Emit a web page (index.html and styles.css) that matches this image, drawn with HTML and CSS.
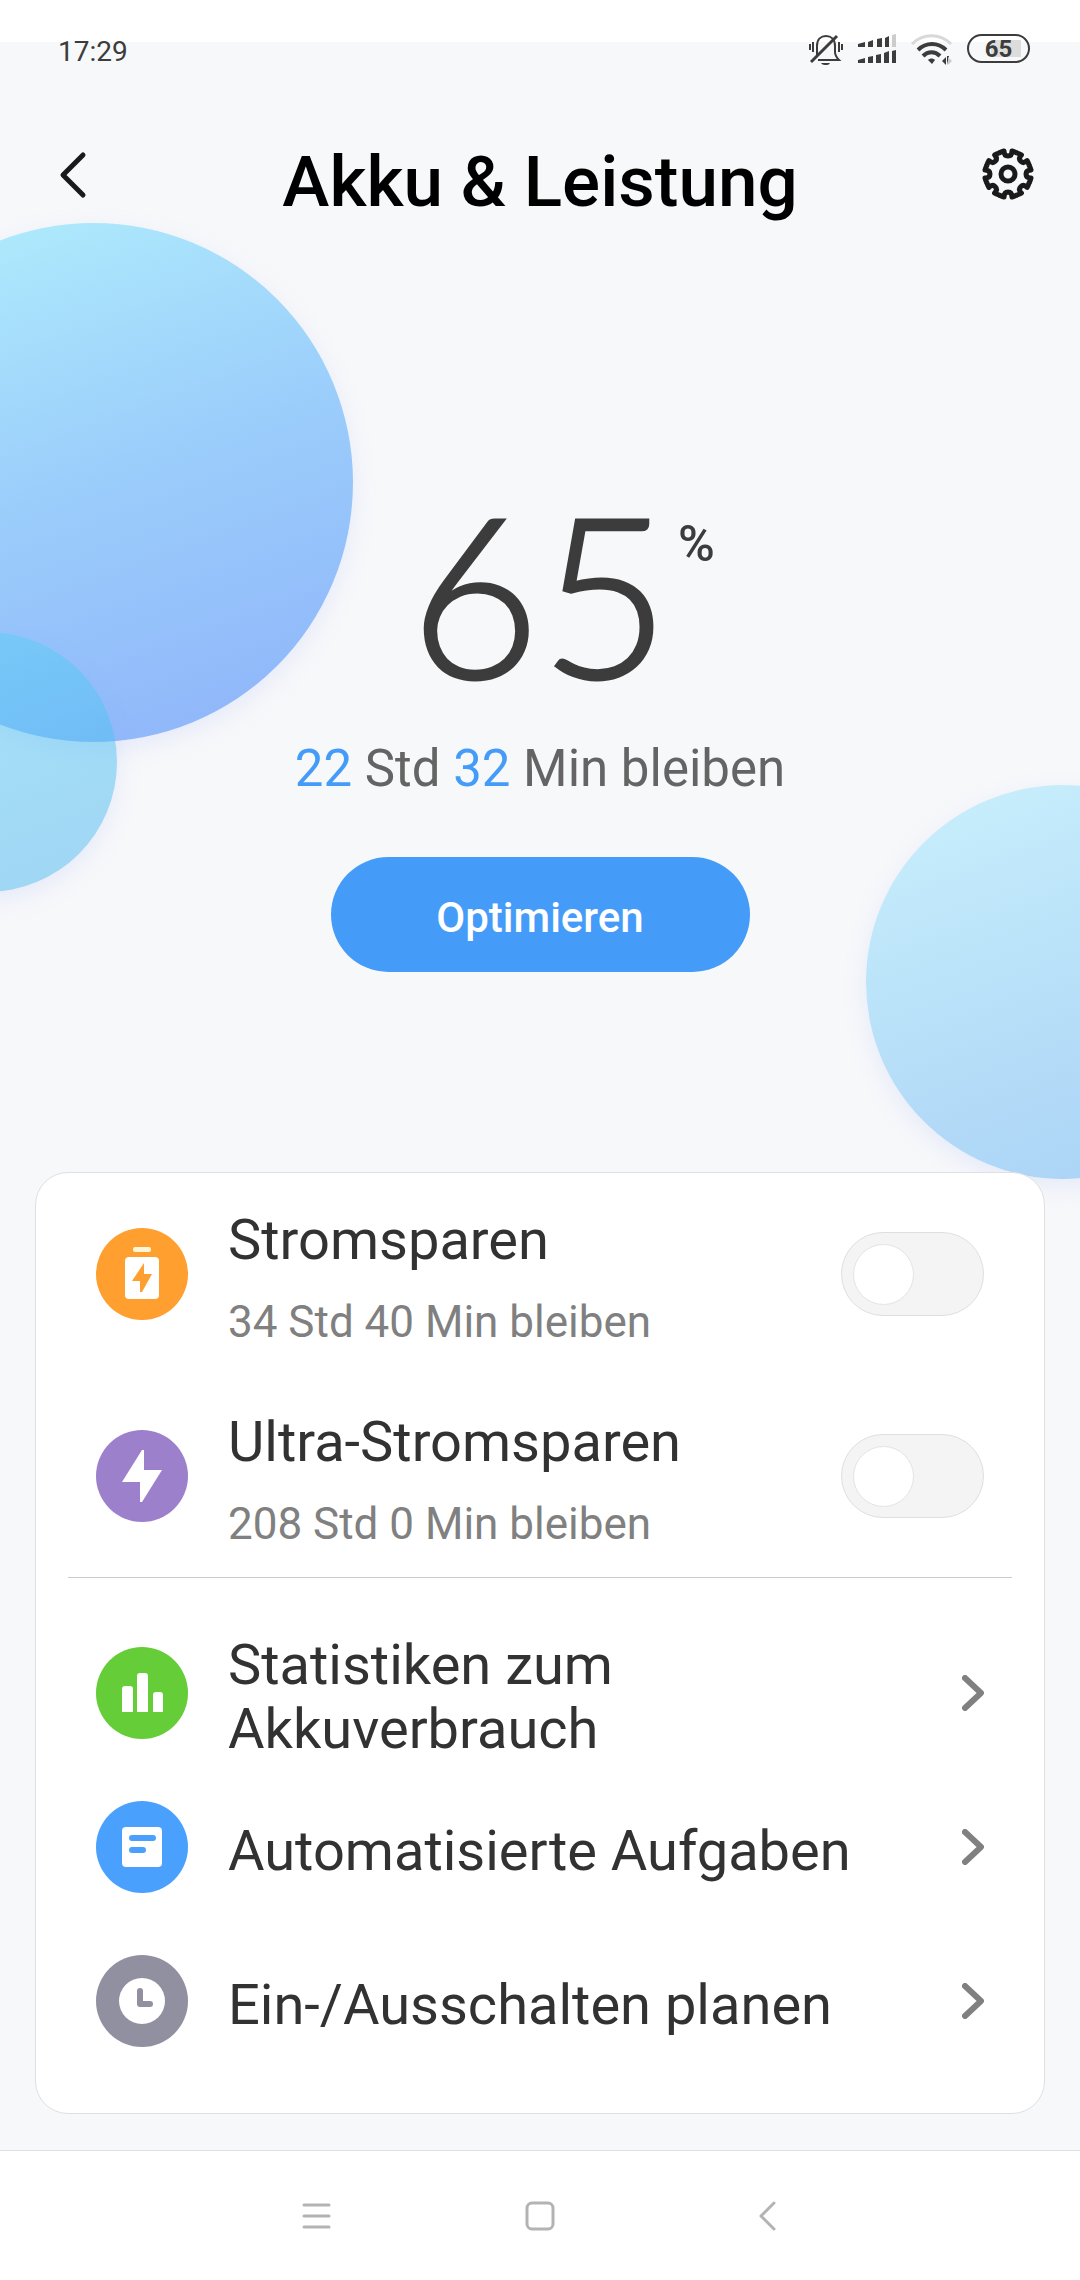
FILE: index.html
```html
<!DOCTYPE html>
<html lang="de">
<head>
  <meta charset="UTF-8">
  <meta name="viewport" content="width=device-width, initial-scale=1.0">
  <title>Akku &amp; Leistung</title>
  <link rel="stylesheet" href="styles.css">
</head>
<body>
  <div class="screen">
    <div class="bubbles" aria-hidden="true">
      <div class="bubble bubble-large"></div>
      <div class="bubble bubble-small"></div>
      <div class="bubble bubble-right"></div>
    </div>

    <div class="status-bar">
      <span class="clock">17:29</span>
      <div class="status-icons">
        <svg class="status-bell" width="34" height="32" viewBox="0 0 34 32" fill="none" stroke="#3c3c3c" stroke-width="2">
          <path d="M8 22V12C8 5 12 2 17 2s9 3 9 10v6c0 4 2 6 4 8H9" />
          <path d="M12 29h9c-1 2-3 2-4 2s-4 0-5-2z" fill="#3c3c3c" stroke="none" />
          <path d="M2 28L28 2" stroke-width="3" />
          <path d="M1 10v6M4 8v10M30 8v10M33 10v6" />
        </svg>
        <svg width="40" height="30" viewBox="0 0 40 30" fill="#3c3c3c">
          <path d="M1 10l7-2v5H1zM11 8l5-2v7h-5zM20 5l5-1v9h-5zM28 4l4-2v11h-4z" />
          <path d="M35 1l4-1v13h-4z" fill="#ccc" />
          <path d="M1 26l7-2v5H1zM11 23l5-1v7h-5zM19 21l5-1v9h-5zM27 19l5-2v12h-5zM35 17l4-1v13h-4z" />
        </svg>
        <svg width="42" height="32" viewBox="0 0 42 32" fill="none" stroke="#3c3c3c" stroke-width="4">
          <path d="M1 10c11-11 28-11 39 0" stroke="#d8d8d8" stroke-width="3" />
          <path d="M7 16c8-8 20-8 28 0" />
          <path d="M12 22c5-5 12-5 17 0" />
          <path d="M17 26c2-2 5-2 7 0l-3 4z" fill="#3c3c3c" stroke="none" />
          <path d="M35 23v8l-4-4zM38 22h-2v9" fill="#3c3c3c" stroke="none" />
          <path d="M37 31v-8l4 4z" fill="#ccc" stroke="none" />
        </svg>
        <span class="battery">65</span>
      </div>
    </div>

    <header class="header">
      <button type="button" class="icon-button" aria-label="Zurück">
        <svg width="52" height="52" viewBox="0 0 52 52" fill="none" stroke="#1a1a1a" stroke-width="5" stroke-linecap="round" stroke-linejoin="round">
          <path d="M37 7L17 27l20 20" />
        </svg>
      </button>
      <h1>Akku &amp; Leistung</h1>
      <button type="button" class="icon-button" aria-label="Einstellungen">
        <svg width="52" height="52" viewBox="-26 -26 52 52" fill="none" stroke="#1a1a1a" stroke-width="5" stroke-linejoin="round">
          <defs>
            <path id="tooth" d="M-9 -21A23 23 0 0 1 -4 -23Q-4 -18 0 -18Q4 -18 4 -23A23 23 0 0 1 9 -21" />
          </defs>
          <use href="#tooth" />
          <use href="#tooth" transform="rotate(45)" />
          <use href="#tooth" transform="rotate(90)" />
          <use href="#tooth" transform="rotate(135)" />
          <use href="#tooth" transform="rotate(180)" />
          <use href="#tooth" transform="rotate(225)" />
          <use href="#tooth" transform="rotate(270)" />
          <use href="#tooth" transform="rotate(315)" />
          <circle r="7" />
        </svg>
      </button>
    </header>

    <main>
      <section class="hero">
        <div class="level">
          <span class="level-value">65</span>
          <span class="level-unit">%</span>
        </div>
        <p class="remaining"><b>22</b> Std <b>32</b> Min bleiben</p>
        <button type="button" class="optimize">Optimieren</button>
      </section>

      <section class="card">
        <div class="row row-mode">
          <svg class="row-icon" viewBox="0 0 92 92">
            <circle cx="46" cy="46" r="46" fill="#ff9f30" />
            <rect x="37" y="19" width="18" height="5" rx="2" fill="#fff6d8" />
            <rect x="29" y="29" width="34" height="42" rx="4" fill="#fff" />
            <path d="M48 35L36 53h8v11h2l10-18h-8z" fill="#ff9f30" />
          </svg>
          <label class="row-text" for="saver">
            <span class="row-title">Stromsparen</span>
            <span class="row-sub">34 Std 40 Min bleiben</span>
          </label>
          <input type="checkbox" class="switch" id="saver">
        </div>
        <div class="row row-mode">
          <svg class="row-icon" viewBox="0 0 92 92">
            <circle cx="46" cy="46" r="46" fill="#9d80cc" />
            <path d="M46 20L26 52h18v20h2l20-32H48V20z" fill="#fff" />
          </svg>
          <label class="row-text" for="ultra">
            <span class="row-title">Ultra-Stromsparen</span>
            <span class="row-sub">208 Std 0 Min bleiben</span>
          </label>
          <input type="checkbox" class="switch" id="ultra">
        </div>

        <nav class="links">
          <a href="#statistik" class="row row-link">
            <svg class="row-icon" viewBox="0 0 92 92">
              <circle cx="46" cy="46" r="46" fill="#64cd37" />
              <path d="M26 65V42q0-3 3-3h5q3 0 3 3v23zM41 65V29q0-3 3-3h5q3 0 3 3v36zM57 65V48q0-3 3-3h4q3 0 3 3v17z" fill="#fff" />
            </svg>
            <span class="row-title">Statistiken zum Akkuverbrauch</span>
            <svg class="chevron" width="22" height="36" viewBox="0 0 22 36">
              <path d="M3 3l16 15L3 33" />
            </svg>
          </a>
          <a href="#aufgaben" class="row row-link">
            <svg class="row-icon" viewBox="0 0 92 92">
              <circle cx="46" cy="46" r="46" fill="#4aa1fd" />
              <rect x="26" y="26" width="40" height="40" rx="4" fill="#fff" />
              <path d="M36 37h21M36 49h11" fill="none" stroke="#4aa1fd" stroke-width="6" stroke-linecap="round" />
            </svg>
            <span class="row-title">Automatisierte Aufgaben</span>
            <svg class="chevron" width="22" height="36" viewBox="0 0 22 36">
              <path d="M3 3l16 15L3 33" />
            </svg>
          </a>
          <a href="#zeitplan" class="row row-link">
            <svg class="row-icon" viewBox="0 0 92 92">
              <circle cx="46" cy="46" r="46" fill="#9190a0" />
              <circle cx="46" cy="46" r="23" fill="#fff" />
              <path d="M44 36v13h10" fill="none" stroke="#9190a0" stroke-width="6" stroke-linecap="round" stroke-linejoin="round" />
            </svg>
            <span class="row-title">Ein-/Ausschalten planen</span>
            <svg class="chevron" width="22" height="36" viewBox="0 0 22 36">
              <path d="M3 3l16 15L3 33" />
            </svg>
          </a>
        </nav>
      </section>
    </main>

    <footer class="nav-bar">
      <button type="button" class="icon-button" aria-label="Menü">
        <svg width="32" height="32" viewBox="0 0 32 32" fill="none" stroke="#b3b3b3" stroke-width="3" stroke-linecap="round">
          <path d="M5 5h25M5 16h25M5 27h25" />
        </svg>
      </button>
      <button type="button" class="icon-button" aria-label="Startseite">
        <svg width="32" height="32" viewBox="0 0 32 32" fill="none" stroke="#b3b3b3" stroke-width="3">
          <rect x="3" y="3" width="26" height="26" rx="5" />
        </svg>
      </button>
      <button type="button" class="icon-button" aria-label="Zurück">
        <svg width="32" height="32" viewBox="0 0 32 32" fill="none" stroke="#b3b3b3" stroke-width="3" stroke-linecap="round" stroke-linejoin="round">
          <path d="M25 3L12 16l13 13" />
        </svg>
      </button>
    </footer>
  </div>
</body>
</html>
```
FILE: styles.css
```css
* {
  box-sizing: border-box;
}

body {
  margin: 0;
  font-family: Roboto, sans-serif;
  color: #323232;
  background-color: #f7f8fa;
}

h1,
p {
  margin: 0;
}

button {
  padding: 0;
  border: none;
  background: none;
  font-family: inherit;
  cursor: pointer;
}

svg {
  display: block;
  flex: none;
}

.screen {
  position: relative;
  display: flex;
  flex-direction: column;
  min-height: 100vh;
  overflow: hidden;
  background: linear-gradient(#fff 42px, #f7f8fa 42px);
}

/* Background bubbles */
.bubbles {
  position: absolute;
  inset: 0;
}

.bubble {
  position: absolute;
  border-radius: 50%;
  box-shadow: 0 8px 24px rgba(140, 170, 250, 0.16);
}

.bubble-large {
  left: -166px;
  top: 223px;
  width: 519px;
  height: 519px;
  background: linear-gradient(160deg, #ade9fc 10%, #9bcdfb 50%, #8fb5fa 95%);
}

.bubble-small {
  left: -143px;
  top: 632px;
  width: 260px;
  height: 260px;
  background: linear-gradient(160deg, rgba(92, 210, 248, 0.5), rgba(70, 178, 238, 0.5));
}

.bubble-right {
  left: calc(100% - 214px);
  top: 785px;
  width: 394px;
  height: 394px;
  background: linear-gradient(160deg, #c9effc 5%, #bbe3f9 40%, #aad2f6 95%);
}

/* Status bar */
.status-bar {
  position: relative;
  display: flex;
  justify-content: space-between;
  align-items: flex-start;
  height: 104px;
  padding: 34px 50px 0 58px;
}

.clock {
  font-size: 28px;
  line-height: 36px;
  color: #3c3c3c;
}

.status-icons {
  display: flex;
  gap: 14px;
}

.battery {
  width: 63px;
  height: 29px;
  border: 2px solid #3c3c3c;
  border-radius: 15px;
  background: linear-gradient(90deg, #dcdcdc, #dcdcdc) 22px 4px / 30px 17px no-repeat;
  font-size: 24px;
  font-weight: 700;
  line-height: 27px;
  text-align: center;
  color: #3c3c3c;
}

/* Header */
.header {
  position: relative;
  display: flex;
  justify-content: space-between;
  align-items: center;
  height: 140px;
  padding: 0 46px;
}

.header h1 {
  padding-top: 16px;
  font-size: 71px;
  font-weight: 500;
  line-height: 84px;
  color: #000;
}

main {
  position: relative;
}

/* Battery level */
.hero {
  display: flex;
  flex-direction: column;
  align-items: center;
  padding-top: 224px;
  padding-bottom: 200px;
}

.level {
  display: grid;
  grid-template-columns: 1fr auto 1fr;
  column-gap: 8px;
  width: 100%;
  color: #3c3c3c;
}

.level-value {
  grid-column: 2;
  font-family: Lato, sans-serif;
  font-size: 224px;
  font-weight: 300;
  line-height: 248px;
  -webkit-text-stroke: 3px #3c3c3c;
}

.level-unit {
  padding-top: 48px;
  font-size: 50px;
  font-weight: 500;
  line-height: 56px;
}

.remaining {
  margin-top: 21px;
  font-size: 51px;
  line-height: 64px;
  color: #646464;
}

.remaining b {
  font-weight: 400;
  color: #459cf8;
}

.optimize {
  width: 419px;
  height: 115px;
  margin-top: 56px;
  padding-top: 6px;
  border-radius: 58px;
  background-color: #459cf8;
  font-size: 42px;
  font-weight: 500;
  color: #fff;
}

/* Card */
.card {
  margin: 0 35px 36px;
  padding-bottom: 35px;
  border: 1px solid #dfe0e2;
  border-radius: 33px;
  background-color: #fff;
}

.row {
  display: flex;
  align-items: center;
  gap: 40px;
  padding: 0 60px;
  color: inherit;
  text-decoration: none;
}

.row-mode {
  height: 202px;
}

.row-icon {
  width: 92px;
  height: 92px;
}

.row-text {
  display: flex;
  flex: 1;
  flex-direction: column;
  gap: 24px;
  padding-top: 8px;
}

.row-title {
  font-size: 56px;
  line-height: 64px;
}

.row-sub {
  font-size: 44px;
  line-height: 52px;
  color: #808080;
}

.links {
  margin: 0 32px;
  padding-top: 38px;
  border-top: 1px solid #cbcbcb;
}

.row-link {
  height: 154px;
  padding: 0 28px;
}

.row-link .row-title {
  flex: 1;
  padding-top: 8px;
}

.chevron {
  fill: none;
  stroke: #808080;
  stroke-width: 6px;
  stroke-linecap: round;
  stroke-linejoin: round;
}

.switch {
  appearance: none;
  display: flex;
  align-items: center;
  width: 143px;
  height: 84px;
  margin: 0;
  padding-left: 11px;
  border: 1px solid #dfdfdf;
  border-radius: 42px;
  background-color: #f4f4f4;
}

.switch::before {
  content: "";
  width: 59px;
  height: 59px;
  border: 1px solid #e4e4e4;
  border-radius: 50%;
  background-color: #fff;
}

.switch:checked {
  justify-content: flex-end;
  padding-right: 11px;
  background-color: #459cf8;
}

/* Navigation bar */
.nav-bar {
  position: relative;
  display: flex;
  justify-content: center;
  align-items: center;
  gap: 193px;
  height: 130px;
  margin-top: auto;
  border-top: 1px solid #dfe0e2;
  background-color: #fff;
}
```
